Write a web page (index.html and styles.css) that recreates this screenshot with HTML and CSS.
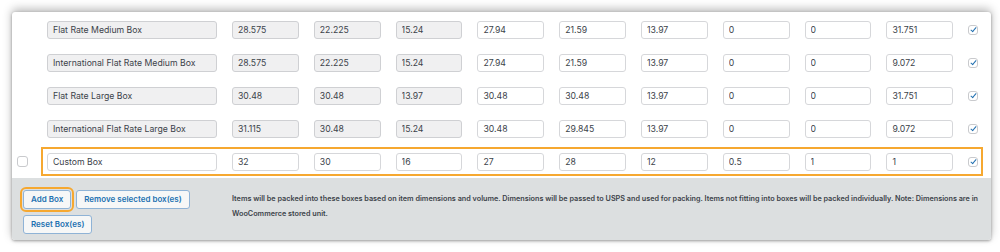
FILE: index.html
```html
<!DOCTYPE html>
<html lang="en">
<head>
  <meta charset="UTF-8">
  <title>Box Sizes</title>
  <link rel="stylesheet" href="styles.css">
</head>
<body>
  <div class="panel">
    <div class="rows">
      <div class="row">
        <div class="sel"></div>
        <div class="box">
          <input class="name" readonly value="Flat Rate Medium Box">
          <input class="num" readonly value="28.575">
          <input class="num" readonly value="22.225">
          <input class="num" readonly value="15.24">
          <input class="num" value="27.94">
          <input class="num" value="21.59">
          <input class="num" value="13.97">
          <input class="num" value="0">
          <input class="num" value="0">
          <input class="num" value="31.751">
          <input class="chk" type="checkbox" checked>
        </div>
      </div>
      <div class="row">
        <div class="sel"></div>
        <div class="box">
          <input class="name" readonly value="International Flat Rate Medium Box">
          <input class="num" readonly value="28.575">
          <input class="num" readonly value="22.225">
          <input class="num" readonly value="15.24">
          <input class="num" value="27.94">
          <input class="num" value="21.59">
          <input class="num" value="13.97">
          <input class="num" value="0">
          <input class="num" value="0">
          <input class="num" value="9.072">
          <input class="chk" type="checkbox" checked>
        </div>
      </div>
      <div class="row">
        <div class="sel"></div>
        <div class="box">
          <input class="name" readonly value="Flat Rate Large Box">
          <input class="num" readonly value="30.48">
          <input class="num" readonly value="30.48">
          <input class="num" readonly value="13.97">
          <input class="num" value="30.48">
          <input class="num" value="30.48">
          <input class="num" value="13.97">
          <input class="num" value="0">
          <input class="num" value="0">
          <input class="num" value="31.751">
          <input class="chk" type="checkbox" checked>
        </div>
      </div>
      <div class="row">
        <div class="sel"></div>
        <div class="box">
          <input class="name" readonly value="International Flat Rate Large Box">
          <input class="num" readonly value="31.115">
          <input class="num" readonly value="30.48">
          <input class="num" readonly value="15.24">
          <input class="num" value="30.48">
          <input class="num" value="29.845">
          <input class="num" value="13.97">
          <input class="num" value="0">
          <input class="num" value="0">
          <input class="num" value="9.072">
          <input class="chk" type="checkbox" checked>
        </div>
      </div>
      <div class="row">
        <div class="sel"><input class="chk" type="checkbox"></div>
        <div class="box highlight">
          <input class="name edit" value="Custom Box">
          <input class="num" value="32">
          <input class="num" value="30">
          <input class="num" value="16">
          <input class="num" value="27">
          <input class="num" value="28">
          <input class="num" value="12">
          <input class="num" value="0.5">
          <input class="num" value="1">
          <input class="num" value="1">
          <input class="chk" type="checkbox" checked>
        </div>
      </div>
    </div>
    <div class="footer">
      <div class="buttons">
        <button class="button marked">Add Box</button>
        <button class="button">Remove selected box(es)</button>
        <button class="button">Reset Box(es)</button>
      </div>
      <p class="desc">Items will be packed into these boxes based on item dimensions and volume. Dimensions will be passed to USPS and used for packing. Items not fitting into boxes will be packed individually. Note: Dimensions are in WooCommerce stored unit.</p>
    </div>
  </div>
</body>
</html>
```

FILE: styles.css
```css
body {
  margin: 0;
  padding: 12px 9px 12px 12px;
  background: #fff;
  font-family: Inter, "Noto Sans", sans-serif;
}
.panel {
  background: #fff;
  border-radius: 3px;
  box-shadow: 0 -3px 10px rgba(0,0,0,0.28), 0 1px 3px rgba(0,0,0,0.35);
  overflow: hidden;
}
.rows {
  padding-top: 3px;
  display: flex;
  flex-direction: column;
  gap: 4px;
}
.row {
  display: flex;
  align-items: center;
}
.sel {
  width: 29px;
  flex: none;
  display: flex;
  padding-left: 5px;
  box-sizing: border-box;
}
.box {
  display: flex;
  align-items: center;
  gap: 15px;
  border: 2px solid transparent;
  padding: 4px 3px 3px 4px;
}
.box.highlight {
  border-color: #f6a830;
}
input {
  font-family: inherit;
  font-size: 8.7px;
  color: #3c434a;
  height: 18px;
  box-sizing: border-box;
  border: 1px solid #d6d7da;
  border-radius: 3px;
  padding: 0 5px;
  margin: 0;
  background: #fff;
  outline: none;
}
input[readonly] {
  background: #f0f0f1;
  border-color: #cfd0d3;
}
.name {
  width: 170px;
}
.num {
  width: 66.8px;
}
.chk {
  appearance: none;
  width: 11px;
  height: 11px;
  padding: 0;
  border: 1px solid #c9cacd;
  border-radius: 3px;
  background: #fff;
  position: relative;
  flex: none;
}
.box .chk {
  width: 10px;
  height: 10px;
}
.chk:checked::after {
  content: "";
  position: absolute;
  left: 3px;
  top: 0px;
  width: 2px;
  height: 5px;
  border: solid #2271b1;
  border-width: 0 1.8px 1.8px 0;
  transform: rotate(40deg);
}
.footer {
  margin-top: 2px;
  background: #dcdfe0;
  display: flex;
  padding: 12px 8px 6px 11px;
  height: 62px;
  box-sizing: border-box;
}
.buttons {
  width: 201px;
  flex: none;
  display: flex;
  flex-wrap: wrap;
  align-content: flex-start;
  gap: 6px 5px;
}
.button {
  font-family: inherit;
  font-size: 8px;
  font-weight: 600;
  color: #2271b1;
  background: #f6f7f7;
  border: 1px solid #8fb3d6;
  border-radius: 3px;
  height: 19px;
  padding: 0 7px;
  margin: 0;
  line-height: 17px;
}
.button.marked {
  outline: 2px solid #f6a830;
  outline-offset: 1px;
}
.desc {
  margin: 1px 0 0 8px;
  font-size: 7.25px;
  font-weight: 600;
  line-height: 15px;
  color: #3c434a;
}
```
